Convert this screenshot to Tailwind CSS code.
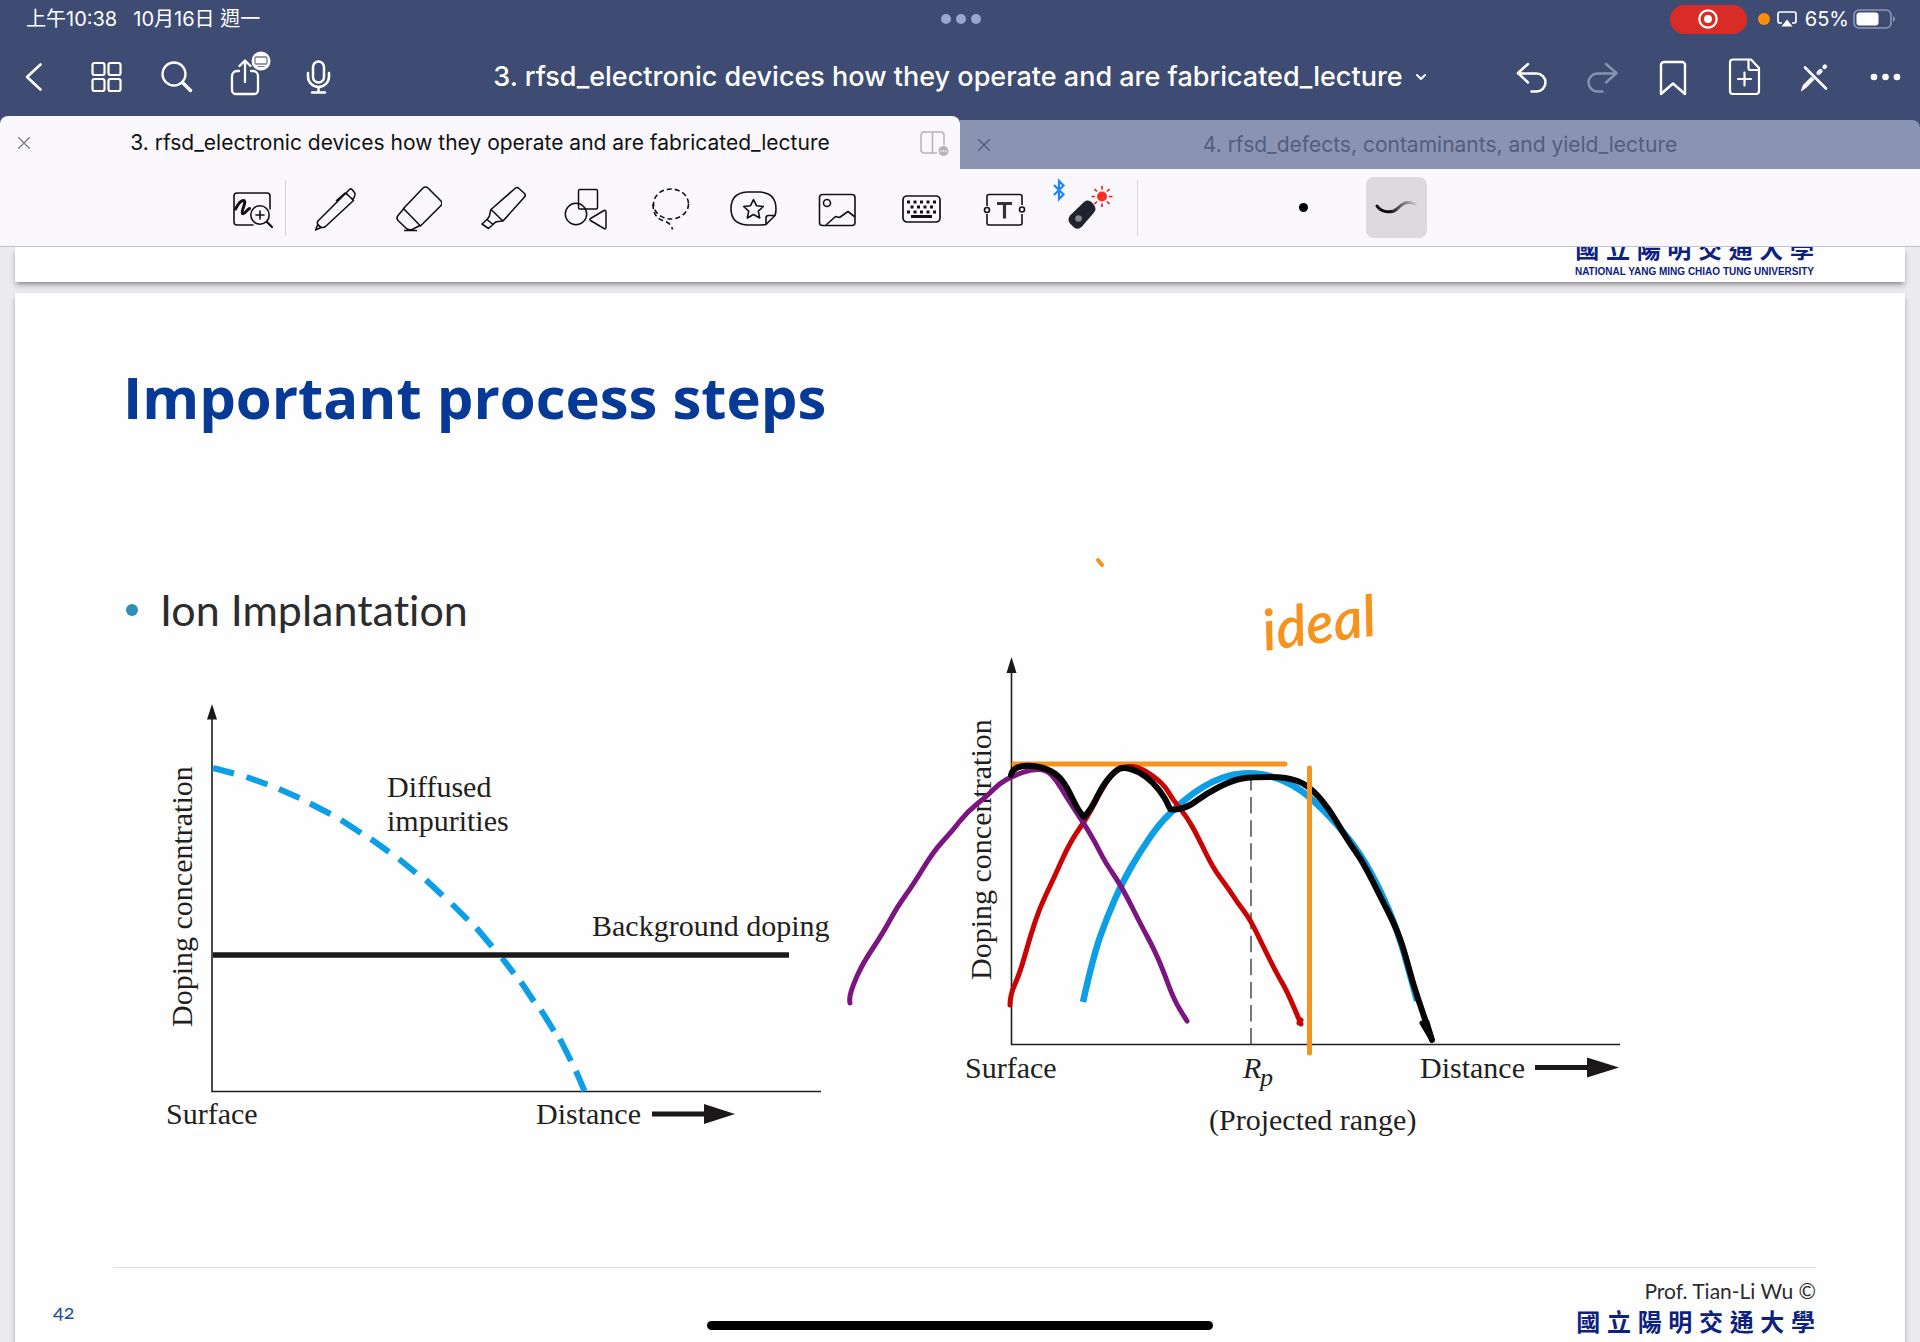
<!DOCTYPE html>
<html lang="zh-Hant">
<head>
<meta charset="utf-8">
<meta name="viewport" content="width=device-width, initial-scale=1">
<title>3. rfsd_electronic devices how they operate and are fabricated_lecture</title>
<script src="https://cdn.jsdelivr.net/npm/@tailwindcss/browser@4"></script>
</head>
<body class="flex h-screen flex-col overflow-hidden bg-[#ebeaee] font-['Inter','Noto_Sans_CJK_TC',sans-serif]">

<header class="shrink-0 bg-[#3e4c74] text-white">
  <!-- Status bar -->
  <div class="grid h-[38px] grid-cols-3 items-center pl-[26px] pr-[24px] text-[20px] leading-6">
    <div class="flex gap-[16px] whitespace-nowrap"><span>上午10:38</span><span>10月16日 週一</span></div>
    <div class="flex justify-center gap-[5px]">
      <span class="size-[10px] rounded-full bg-[#9ba7d3]"></span>
      <span class="size-[10px] rounded-full bg-[#9ba7d3]"></span>
      <span class="size-[10px] rounded-full bg-[#9ba7d3]"></span>
    </div>
    <div class="flex items-center justify-end">
      <span class="flex h-[29px] w-[77px] items-center justify-center rounded-full bg-[#d92c26]">
        <svg class="size-5" viewBox="0 0 20 20" fill="none"><circle cx="10" cy="10" r="8.7" stroke="#fff" stroke-width="2.2"/><circle cx="10" cy="10" r="4" fill="#fff"/></svg>
      </span>
      <span class="ml-[11px] size-3 rounded-full bg-[#ff8d0a]"></span>
      <svg class="ml-[7px] h-4 w-5" viewBox="0 0 20 16" fill="none"><path d="M5 12H3a2 2 0 0 1-2-2V3a2 2 0 0 1 2-2h14a2 2 0 0 1 2 2v7a2 2 0 0 1-2 2h-2" stroke="#fff" stroke-width="1.7"/><path d="M10 8.5 15.500 15.500H4.500Z" fill="#fff"/></svg>
      <span class="ml-2">65%</span>
      <svg class="ml-1 h-5 w-[43px]" viewBox="0 0 43 20" fill="none"><rect x="1" y="1" width="37" height="18" rx="5" stroke="#8f98b4" stroke-width="1.6"/><rect x="3.500" y="3.500" width="22" height="13" rx="3" fill="#fff"/><path d="M40 7v6q2-1 2-3t-2-3Z" fill="#8f98b4"/></svg>
    </div>
  </div>

  <!-- Navigation bar -->
  <div class="flex h-[78px] items-center">
    <div class="flex w-[426px] shrink-0">
      <button aria-label="Back" class="flex w-[71px] justify-center"><svg class="size-12" viewBox="0 0 48 48" fill="none" stroke="#fff" stroke-width="2.600" stroke-linecap="round" stroke-linejoin="round"><path d="M28.500 11.500 15 24l13.500 12.500"/></svg></button>
      <button aria-label="Thumbnails" class="flex w-[71px] justify-center"><svg class="size-12" viewBox="0 0 48 48" fill="none" stroke="#fff" stroke-width="2.200"><rect x="9.500" y="10" width="12" height="12" rx="2"/><rect x="25.500" y="10" width="12" height="12" rx="2"/><rect x="9.500" y="26" width="12" height="12" rx="2"/><rect x="25.500" y="26" width="12" height="12" rx="2"/></svg></button>
      <button aria-label="Search" class="flex w-[71px] justify-center"><svg class="size-12" viewBox="0 0 48 48" fill="none" stroke="#fff" stroke-linecap="round"><circle cx="20" cy="21" r="11.500" stroke-width="2.300"/><path d="m28.500 29.500 8 8" stroke-width="3.400"/></svg></button>
      <button aria-label="Share" class="flex w-[71px] justify-center"><svg class="size-12 overflow-visible" viewBox="0 0 48 48" fill="none" stroke="#fff" stroke-width="2.300" stroke-linecap="round" stroke-linejoin="round"><path d="M14 18h-2a5 5 0 0 0-5 5v14a4 4 0 0 0 4 4h18a4 4 0 0 0 4-4V23a5 5 0 0 0-5-5h-2M20 29V8M14.500 13 20 7.500l5.500 5.500"/><circle cx="36" cy="8" r="9.500" fill="#fff" stroke="none"/><rect x="30" y="4" width="12" height="7" rx="1" stroke="#747b90" stroke-width="1.300"/><path d="M33 13.500h6" stroke="#747b90" stroke-width="1.200"/></svg></button>
      <button aria-label="Record" class="flex w-[71px] justify-center"><svg class="size-12" viewBox="0 0 48 48" fill="none" stroke="#fff" stroke-width="2.500" stroke-linecap="round"><rect x="17" y="8.500" width="11" height="21" rx="5.500"/><path d="M12 20v3.500a10.500 10.500 0 0 0 21 0V20M22.500 34v5M16 39.500h13"/></svg></button>
    </div>
    <button class="flex min-w-0 flex-1 items-center justify-center gap-3 whitespace-nowrap text-[27px] leading-8 font-medium">
      <span>3. rfsd_electronic devices how they operate and are fabricated_lecture</span>
      <svg class="h-2 w-3" viewBox="0 0 12 8" fill="none" stroke="#fff" stroke-width="2" stroke-linecap="round" stroke-linejoin="round"><path d="m2 2 4 4 4-4"/></svg>
    </button>
    <div class="flex w-[426px] shrink-0">
      <button aria-label="Undo" class="flex w-[71px] justify-center"><svg class="size-12" viewBox="0 0 48 48" fill="none" stroke="#fff" stroke-width="2.500" stroke-linecap="round" stroke-linejoin="round"><path d="M22 11 12 20l10 9.500M12 20.500h18.500a9 9 0 0 1 0 18h-5"/></svg></button>
      <button aria-label="Redo" class="flex w-[71px] justify-center"><svg class="size-12" viewBox="0 0 48 48" fill="none" stroke="#8791b0" stroke-width="2.500" stroke-linecap="round" stroke-linejoin="round"><path d="M29 11 39.500 20 29 29.500M39.500 20.500h-19a9 9 0 0 0 0 18h5"/></svg></button>
      <button aria-label="Bookmark" class="flex w-[71px] justify-center"><svg class="size-12" viewBox="0 0 48 48" fill="none" stroke="#fff" stroke-width="2.400" stroke-linejoin="round"><path d="M13 41V12a3 3 0 0 1 3-3h18a3 3 0 0 1 3 3v29L25 30.500Z"/></svg></button>
      <button aria-label="Add page" class="flex w-[71px] justify-center"><svg class="size-12" viewBox="0 0 48 48" fill="none" stroke="#fff" stroke-width="2.200" stroke-linecap="round" stroke-linejoin="round"><path d="M14 6.500h18L40 15v23a3 3 0 0 1-3 3H14a3 3 0 0 1-3-3V9.500a3 3 0 0 1 3-3ZM29.500 7v8a2 2 0 0 0 2 2H40M25.500 19.500v13M19 26h13"/></svg></button>
      <button aria-label="Read only" class="flex w-[71px] justify-center"><svg class="size-12" viewBox="0 0 48 48" fill="none" stroke="#fff" stroke-linecap="round"><path d="M15 14.500 36 35.500" stroke-width="2.600"/><path d="M28.500 20 30.500 18M34.500 14l.5-.5" stroke-width="4.200"/><path d="M11.500 37.500 13.500 32l8-8 2.500 2.500-8 8Z" fill="#fff" stroke-width="1"/></svg></button>
      <button aria-label="More" class="flex w-[71px] justify-center"><svg class="size-12" viewBox="0 0 48 48" fill="#fff"><circle cx="13" cy="24" r="3.300"/><circle cx="24.500" cy="24" r="3.300"/><circle cx="36" cy="24" r="3.300"/></svg></button>
    </div>
  </div>

  <!-- Document tabs -->
  <nav class="flex h-[53px] items-end text-[21px] leading-6">
    <div class="flex h-full w-1/2 items-center rounded-t-lg bg-[#faf8fd] text-[#111]">
      <button aria-label="Close tab" class="flex w-12 shrink-0 justify-center"><svg class="size-3" viewBox="0 0 12 12" stroke="#7c7b80" stroke-width="1.300"><path d="m0 0 12 12M12 0 0 12"/></svg></button>
      <a href="#slide-42" class="min-w-0 flex-1 text-center whitespace-nowrap">3. rfsd_electronic devices how they operate and are fabricated_lecture</a>
      <button aria-label="Split view" class="flex w-12 shrink-0 justify-center"><svg class="h-6 w-8 overflow-visible" viewBox="0 0 32 24" fill="none" stroke="#b4b3b8" stroke-width="1.500"><path d="M17 22H4a3 3 0 0 1-3-3V4a3 3 0 0 1 3-3h17a3 3 0 0 1 3 3v10M12.500 1v21"/><circle cx="23.500" cy="20" r="5" fill="#b4b3b8" stroke="none"/><path d="M20.500 20h6" stroke="#fff" stroke-dasharray="1.200 1.200"/></svg></button>
    </div>
    <div class="flex h-[49px] w-1/2 items-center rounded-tr-lg bg-[#8b93b3] text-[#555d7c]">
      <button aria-label="Close tab" class="flex w-12 shrink-0 justify-center"><svg class="size-3" viewBox="0 0 12 12" stroke="#4f5878" stroke-width="1.300"><path d="m0 0 12 12M12 0 0 12"/></svg></button>
      <a href="#other" class="min-w-0 flex-1 pr-12 text-center whitespace-nowrap">4. rfsd_defects, contaminants, and yield_lecture</a>
    </div>
  </nav>
</header>

<!-- Drawing tools -->
<div class="relative z-10 flex h-[78px] shrink-0 items-center border-b border-[#c3c2c7] bg-[#faf8fd] pl-[219px]">
  <button aria-label="Zoom window" class="flex w-[66px] justify-center"><svg class="size-12" viewBox="0 0 48 48" fill="none" stroke="#111" stroke-width="1.600" stroke-linecap="round"><path d="M25 41H9a3 3 0 0 1-3-3V12a3 3 0 0 1 3-3h30a3 3 0 0 1 3 3v13"/><path d="M7.500 25c2-4 5-8.500 8-8.500 4 0-3 11-1 13 2.500 1.500 4-4 7-5" stroke-width="3"/><circle cx="32" cy="31" r="9.200"/><path d="M32 27v8M28 31h8"/><path d="m39 38 5 5" stroke-width="2.200"/></svg></button>
  <span class="h-14 w-px bg-[#d6d5da]"></span>
  <div class="ml-[6px] flex">
    <button aria-label="Pen" class="flex w-[84px] justify-center"><svg class="size-12" viewBox="0 0 48 48" fill="none" stroke="#111" stroke-width="1.600" stroke-linejoin="round"><path d="m8 37 28-28 7.500 7.500-28 26q-3 2-5.500 0-4-2.500-2-5.500ZM36 9l4-4q1-.5 2 .5l2.500 3q1.500 2 0 4l-1.500 3M26 17l9-8 2.500 2M8 40l-2.500 6 5.500-2.500"/></svg></button>
    <button aria-label="Eraser" class="flex w-[84px] justify-center"><svg class="size-12" viewBox="0 0 48 48" fill="none" stroke="#111" stroke-width="1.600" stroke-linejoin="round"><path d="M9.500 24.500 29 4q2.500-2 5 0l13 13q2 2.500 0 4.500L26.500 42ZM9.500 25 4 31.500q-2 2.500 0 5l9 8.500q2.500 1.500 5 .5l8-4M10 46.500h13"/></svg></button>
    <button aria-label="Highlighter" class="flex w-[84px] justify-center"><svg class="size-12" viewBox="0 0 48 48" fill="none" stroke="#111" stroke-width="1.600" stroke-linejoin="round"><path d="M13 25.500 37 4.500q2-2 4 0l5.500 5q1.500 2 0 3.500L25 37ZM13 25.500q-1 2-1 4 0 3-3 6l6 5q2-3 5-3l5-.5M9 35.500l-5 4.500 6.500 4.500 4.500-4"/></svg></button>
    <button aria-label="Shapes" class="flex w-[84px] justify-center"><svg class="size-12" viewBox="0 0 48 48" fill="none" stroke="#111" stroke-width="1.500" stroke-linejoin="round"><rect x="16.500" y="5.500" width="19" height="19.500" rx="1.500"/><circle cx="14" cy="30" r="10.700"/><path d="M28.500 34.500 42 26.500q2-.8 2 1.500v15q0 2.500-2 1.500l-13.500-8q-1.500-1 0-2Z"/></svg></button>
    <button aria-label="Lasso" class="flex w-[84px] justify-center"><svg class="size-12" viewBox="0 0 48 48" fill="none" stroke="#111" stroke-width="1.600" stroke-dasharray="5 3"><ellipse cx="25" cy="20" rx="17.500" ry="15"/><path d="M7 20q0 14 11 17 7 2 8.500 8.500"/></svg></button>
    <button aria-label="Sticker" class="flex w-[84px] justify-center"><svg class="size-12" viewBox="0 0 48 48" fill="none" stroke="#111" stroke-width="1.600" stroke-linejoin="round"><path d="M36 40.500q-2 .5-5 .5H17Q1 40 1 24.500T17 8h13q16 1 16 17 0 4-1 6.500L36 40.500V34q0-2.500 2.500-2.500H45"/><path d="m23.500 15.500 3 6.200 6.800.8-5 4.600 1.400 6.900-6.200-3.500-6.200 3.500 1.400-6.900-5-4.600 6.800-.8Z"/></svg></button>
    <button aria-label="Image" class="flex w-[84px] justify-center"><svg class="size-12" viewBox="0 0 48 48" fill="none" stroke="#111" stroke-width="1.600" stroke-linejoin="round"><rect x="5.500" y="10.500" width="35.500" height="31" rx="3"/><circle cx="13" cy="19" r="3.500"/><path d="m12 41 9.500-8.500 4 1 8.500-6 7 5.500"/></svg></button>
    <button aria-label="Keyboard" class="flex w-[84px] justify-center"><svg class="size-12" viewBox="0 0 48 48" fill="none" stroke="#111" stroke-width="1.700"><rect x="5" y="12" width="37" height="26" rx="4"/><path d="M9 18h29M9 28h29" stroke-width="3" stroke-dasharray="3 3.500"/><path d="M12.500 23h25" stroke-width="3" stroke-dasharray="3 3.500"/><path d="M13 32.500h21" stroke-width="3"/></svg></button>
    <button aria-label="Text box" class="flex w-[84px] justify-center"><svg class="size-12" viewBox="0 0 48 48" fill="none" stroke="#111" stroke-width="1.600"><path d="M5 22v-9.500a2 2 0 0 1 2-2h31a2 2 0 0 1 2 2V21M5 30v9a2 2 0 0 0 2 2h31a2 2 0 0 0 2-2v-9"/><circle cx="5" cy="26" r="2.500"/><circle cx="40" cy="25.500" r="2.500"/><path d="M15 19.500h15M22.500 18v16.500" stroke="#333" stroke-width="3.200"/></svg></button>
    <button aria-label="Laser pointer" class="flex w-[84px] justify-center"><svg class="size-12 overflow-visible" viewBox="0 0 48 48" fill="none"><path d="m-12 1 9.500 9.500L-7 15V-3l4.500 4.500L-12 11" stroke="#1a86f5" stroke-width="2.200"/><path d="M4 31.500 18 18q4-3 8 .5l2 2.500q3 4 0 7.500L16 42.500q-4 4-8 1l-4-4q-3-4 0-8Z" fill="#20232d"/><circle cx="12.500" cy="34.500" r="3.300" fill="#85868c"/><circle cx="36" cy="12.500" r="5" fill="#ff2d1f"/><path d="M36 2v3.500M36 19.500V23M25.500 12.500H29M43 12.500h3.500M28.500 5l2.500 2.500M41 17.500l2.500 2.500M43.500 5 41 7.500M31 17.500 28.500 20" stroke="#e0261c" stroke-width="1.700"/></svg></button>
  </div>
  <span class="ml-[5px] h-14 w-px bg-[#d6d5da]"></span>
  <div class="ml-[135px] flex gap-8">
    <button aria-label="Dot" class="flex size-[61px] items-center justify-center rounded-lg"><span class="size-[9px] rounded-full bg-black"></span></button>
    <button aria-label="Trail" class="flex size-[61px] items-center justify-center rounded-lg bg-[#dcdadf]">
      <svg class="h-6 w-12" viewBox="0 0 48 24" fill="none"><defs><linearGradient id="trail" x1="0" x2="1" y1="0" y2="0"><stop offset=".3" stop-color="#0a0a0a"/><stop offset="1" stop-color="#c8c6cb"/></linearGradient></defs><path d="M4 10c4 6 14 8 20 3 4-4 8-9 18-5" stroke="url(#trail)" stroke-width="3" stroke-linecap="round"/></svg>
    </button>
  </div>
</div>

<main class="min-h-0 flex-1 overflow-hidden px-[15px]">
  <!-- End of the previous page -->
  <section class="flex h-[35px] items-end justify-end bg-[#fefefe] pr-[91px] pb-[3px] shadow-md shadow-black/30">
    <div class="flex flex-col items-end font-['Liberation_Sans','Noto_Sans_CJK_TC',sans-serif] font-bold whitespace-nowrap text-[#0d2180]">
      <p class="text-[24px] leading-[30px]">國 立 陽 明 交 通 大 學</p>
      <p class="text-[10px] leading-[14px]">NATIONAL YANG MING CHIAO TUNG UNIVERSITY</p>
    </div>
  </section>

  <section id="slide-42" class="mt-[11px] bg-[#fefefe] pt-[68px] font-['Lato',sans-serif] shadow-md shadow-black/30">
    <h1 class="pl-[108px] font-['Open_Sans',sans-serif] text-[58px] leading-[72px] font-bold text-[#063a96]">Important process steps</h1>
    <ul class="mt-[151px] pl-[111px] text-[43px] leading-[52px] text-[#2c2b2e] [font-variant-ligatures:none]">
      <li class="flex items-center gap-[22px]"><span class="size-3 rounded-full bg-[#2f8fb6]"></span>Ion Implantation</li>
    </ul>

    <svg class="block w-full overflow-visible" viewBox="15 636 1890 614" fill="none" role="img" aria-label="Doping concentration against distance">
      <!-- Axes -->
      <g stroke="#231f20" stroke-width="1.600">
        <path d="M212 716V1091.500H821"/>
        <path d="M1011.500 670V1044.500H1620"/>
      </g>
      <path d="M1251 774V1044" stroke="#55555a" stroke-width="1.600" stroke-dasharray="16.500 6.600"/>
      <g fill="#1b1819">
        <path d="M212 704 217 719.500H207Z"/>
        <path d="M1011.500 657 1016.500 673H1006.500Z"/>
        <path d="M652 1111.500h52V1104l31 10-31 10v-7.500h-52Z"/>
        <path d="M1535 1065h52v-7.500l32 10-32 10V1070h-52Z"/>
      </g>
      <!-- Diffusion profile -->
      <path stroke="#0d9fe6" stroke-width="6" d="M213 768 234 773.500M246.500 777 267.500 784.500M279 789 299.500 798M310 803.500 330.500 814M341 820 361 833M371 839 389 852M399 859 416 873M426 880 442.500 895.500M452 904 468 920M476.500 928 492 946.500M502 958 514 973.500M521 982 534 1001.500M541 1010 554 1031M560 1039 571 1061M576 1071 584.500 1091"/>
      <path d="M213 955H789" stroke="#1b1819" stroke-width="5.500"/>
      <g class="font-['Liberation_Serif',serif] text-[30px]" fill="#231f20">
        <text x="387" y="797">Diffused</text>
        <text x="387" y="831">impurities</text>
        <text x="592" y="936">Background doping</text>
        <text x="166" y="1124">Surface</text>
        <text x="536" y="1124">Distance</text>
        <text transform="translate(192 1027) rotate(-90)">Doping concentration</text>
        <text x="965" y="1078">Surface</text>
        <text x="1243" y="1078" class="italic">R</text>
        <text x="1260" y="1086" class="text-[26px] italic">p</text>
        <text x="1209" y="1130">(Projected range)</text>
        <text x="1420" y="1078">Distance</text>
        <text transform="translate(991 980) rotate(-90)">Doping concentration</text>
      </g>

      <!-- Implantation profiles and pen annotations -->
      <g id="ink" stroke-linecap="round" stroke-linejoin="round">
        <path stroke="#0d9fe6" stroke-width="6.500" stroke-linecap="butt" data-points="1083,1002 1093,957 1107,917 1123,881 1140,852 1157,827 1173,810 1193,793 1213,781 1233,774 1253,773 1272,776 1293,785 1310,797 1337,824 1360,853 1380,889 1397,929 1408,967 1417,1001"/>
        <path stroke="#f6921e" stroke-width="5" d="M1014 764H1285"/>
        <path stroke="#c90404" stroke-width="5" data-points="1010,1005 1010,995 1020,973 1030,937 1040,907 1053,880 1070,842 1087,818 1103,787 1115,770 1125,766 1140,767 1163,783 1173,800 1187,817 1198,837 1213,868 1228,888 1237,902 1250,919 1263,946 1277,974 1287,991 1301,1024"/>
        <path stroke="#c90404" stroke-width="5" d="M1299 1023 1301 1020"/>
        <path stroke="#7b1580" stroke-width="5" data-points="850,1003 849,999 853,985 863,963 883,933 897,907 913,885 933,852 953,830 967,812 987,796 1000,783 1013,776 1032,769 1047,770 1057,781 1067,798 1083,822 1095,842 1105,862 1122,887 1142,927 1153,947 1163,970 1174,1000 1187,1021"/>
        <path stroke="#050505" stroke-width="6" data-points="1011,775 1012,770 1023,765 1043,767 1058,775 1067,787 1077,808 1083,816 1084,817 1085,816 1092,807 1103,785 1115,771 1123,767 1138,771 1153,782 1165,798 1170,809 1171,810 1187,808 1207,793 1233,780 1252,777 1287,777 1308,785 1328,807 1348,841 1363,862 1382,900 1393,921 1403,946 1413,984 1425,1019 1432,1040"/>
        <path stroke="#050505" stroke-width="5" d="M1422 1023 1432 1040 1427 1022"/>
        <path stroke="#f6921e" stroke-width="5" d="M1309.500 768V1053"/>
        <path stroke="#f6921e" stroke-width="4" d="M1098 560 1102 565"/>
      </g>
      <text transform="translate(1265 651) rotate(-8)" class="font-['Lato',sans-serif] text-[57px] font-semibold italic" fill="#f6921e">ideal</text>
    </svg>

    <footer class="mr-[89px] ml-[98px] mt-[17px] border-t border-[#dededf] pt-[11px] pb-4">
      <div class="relative flex flex-col items-end whitespace-nowrap">
        <span class="absolute top-[20px] -left-[60px] text-[20px] leading-6 text-[#1c4d9c] [font-variant-numeric:oldstyle-nums]">42</span>
        <p class="text-[21px] leading-6 text-[#2c2b2e]">Prof. Tian-Li Wu ©</p>
        <p class="mt-[5px] pr-px font-['Liberation_Sans','Noto_Sans_CJK_TC',sans-serif] text-[24px] leading-[30px] font-bold text-[#0d2180]">國 立 陽 明 交 通 大 學</p>
      </div>
    </footer>
  </section>
</main>

<div class="fixed bottom-3 left-1/2 h-[9px] w-[506px] -translate-x-1/2 rounded-full bg-black"></div>

<script>
  // Turns each stroke's sampled pen positions into a smooth path.
  document.querySelectorAll('#ink [data-points]').forEach(function (el) {
    var p = el.dataset.points.split(' ').map(function (s) { return s.split(',').map(Number); });
    var d = 'M' + p[0];
    for (var i = 1; i < p.length - 1; i++) {
      d += 'Q' + p[i] + ' ' + (p[i][0] + p[i + 1][0]) / 2 + ',' + (p[i][1] + p[i + 1][1]) / 2;
    }
    el.setAttribute('d', d + 'L' + p[p.length - 1]);
  });
</script>
</body>
</html>
